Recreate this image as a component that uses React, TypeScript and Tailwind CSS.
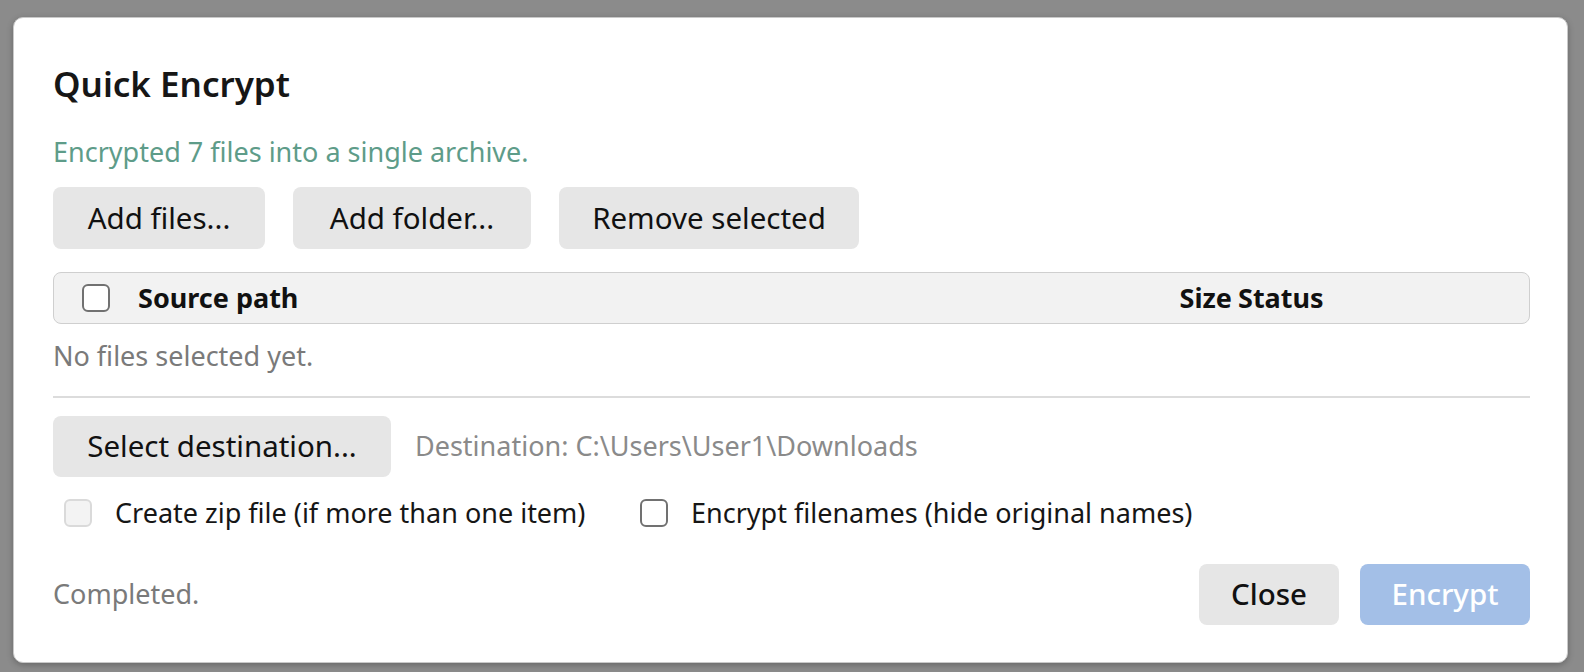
import React from "react";

const font = { fontFamily: '"Noto Sans", "Open Sans", sans-serif' };

function Box({ disabled }: { disabled?: boolean }) {
  return (
    <span
      className={
        disabled
          ? "inline-block w-[28px] h-[28px] rounded-[6px] border-2 border-[#dadada] bg-[#f3f3f3] shrink-0"
          : "inline-block w-[28px] h-[28px] rounded-[6px] border-2 border-[#717171] bg-white shrink-0"
      }
    />
  );
}

function Btn({ children, className = "" }: { children: React.ReactNode; className?: string }) {
  return (
    <button
      className={
        "rounded-[8px] bg-[#e6e6e6] text-[#111] text-[29.5px] flex items-center justify-center shrink-0 " +
        className
      }
    >
      {children}
    </button>
  );
}

export default function App() {
  return (
    <div className="w-[1584px] h-[672px] bg-[#8b8b8b] pt-[17px] pl-[13px] overflow-hidden" style={font}>
      <div className="w-[1555px] h-[646px] bg-white rounded-[10px] border border-[#c9c9c9] shadow-[0_2px_6px_rgba(0,0,0,0.25)] pl-[39px] pr-[37px] pt-[45px] flex flex-col">
        <h1 className="text-[35px] leading-[42px] font-semibold text-[#161616]">Quick Encrypt</h1>
        <p className="mt-[29px] text-[27px] leading-[36px] text-[#5e9c89]">
          Encrypted 7 files into a single archive.
        </p>
        <div className="mt-[17px] flex gap-[28px]">
          <Btn className="w-[212px] h-[62px]">Add files...</Btn>
          <Btn className="w-[238px] h-[62px]">Add folder...</Btn>
          <Btn className="w-[300px] h-[62px]">Remove selected</Btn>
        </div>
        <div className="mt-[23px] h-[52px] rounded-[8px] border border-[#cfcfcf] bg-[#f2f2f2] flex items-center pl-[28px] text-[27px] font-bold text-[#111]">
          <Box />
          <span className="ml-[28px] flex-1">Source path</span>
          <span className="text-right mr-[6px]">Size</span>
          <span className="w-[291px]">Status</span>
        </div>
        <p className="mt-[14px] text-[27px] leading-[36px] text-[#7a7a7a]">No files selected yet.</p>
        <div className="mt-[22px] h-[2px] bg-[#dcdcdc]" />
        <div className="mt-[18px] flex items-center gap-[24px]">
          <Btn className="w-[338px] h-[61px]">Select destination...</Btn>
          <span className="text-[27px] text-[#8a8a8a]">Destination: C:\Users\User1\Downloads</span>
        </div>
        <div className="mt-[18px] h-[36px] flex items-center text-[27px] text-[#161616]">
          <div className="w-[587px] flex items-center pl-[11px]">
            <Box disabled />
            <span className="ml-[23px]">Create zip file (if more than one item)</span>
          </div>
          <Box />
          <span className="ml-[23px]">Encrypt filenames (hide original names)</span>
        </div>
        <div className="mt-[33px] flex items-center">
          <span className="flex-1 text-[27px] text-[#7a7a7a]">Completed.</span>
          <Btn className="w-[140px] h-[61px] font-medium">Close</Btn>
          <button className="ml-[21px] w-[170px] h-[61px] rounded-[8px] bg-[#a3bfe7] text-white text-[29.5px] font-medium flex items-center justify-center">
            Encrypt
          </button>
        </div>
      </div>
    </div>
  );
}
